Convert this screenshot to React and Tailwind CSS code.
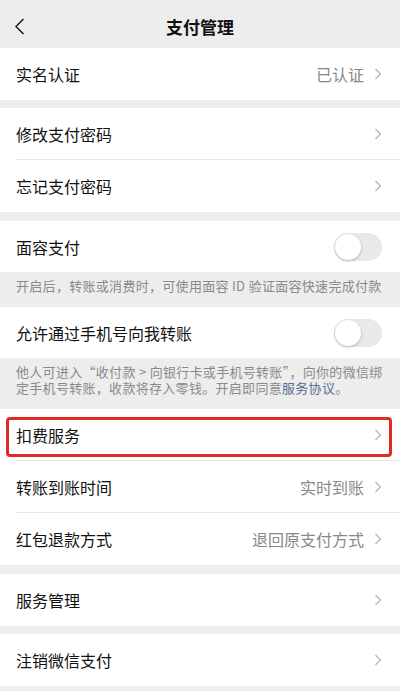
import React from 'react';

const font = { fontFamily: '"Noto Sans CJK SC", "Noto Sans", sans-serif' };

const Chevron = () => (
  <svg width="8" height="12" viewBox="0 0 8 12" className="shrink-0">
    <path d="M1.5 1 L6.5 6 L1.5 11" fill="none" stroke="#b5b5b5" strokeWidth="1.2" />
  </svg>
);

const Switch = () => (
  <div className="w-[48px] h-[28px] rounded-full bg-[#e9e9e9] p-[1px] flex items-center">
    <div className="w-[26px] h-[26px] rounded-full bg-white shadow-[0_1px_3px_rgba(0,0,0,0.25)]" />
  </div>
);

const Row = ({ label, value, toggle, divider, highlight, short }) => (
  <div className="relative bg-white">
    <div className={`${divider || short ? 'h-[51px]' : 'h-[52px]'} flex items-center pl-4 pr-[18px]`}>
      <span className="flex-1 text-[16px] text-[#111]">{label}</span>
      {value && <span className="text-[16px] text-[#888] mr-[10px]">{value}</span>}
      {toggle ? <Switch /> : <Chevron />}
    </div>
    {divider && <div className="ml-4 h-px bg-[#e8e8e8]" />}
    {highlight && (
      <div className="absolute left-[6px] right-[8px] top-[8px] bottom-[4px] border-[3px] border-[#e02a22] rounded-[4px]" />
    )}
  </div>
);

const Note = ({ children }) => (
  <div className="px-4 pt-[6px] pb-[13px] text-[13px] leading-[16px] text-[#8a8a8a] tracking-[0.3px]">
    {children}
  </div>
);

export default function App() {
  return (
    <div className="w-[400px] h-[691px] bg-[#ededed] overflow-hidden" style={font}>
      {/* top bar */}
      <div className="h-[48px] flex items-center relative">
        <svg width="12" height="18" viewBox="0 0 12 18" className="absolute left-[14px] top-[18px]">
          <path d="M9.5 1 L2 8.5 L9.5 16" fill="none" stroke="#1a1a1a" strokeWidth="1.5" />
        </svg>
        <div className="flex-1 text-center text-[17px] font-semibold text-[#111] pt-[6px]">支付管理</div>
      </div>

      <Row label="实名认证" value="已认证" />

      <div className="h-[8px]" />
      <Row label="修改支付密码" divider />
      <Row label="忘记支付密码" />

      <div className="h-[9px]" />
      <Row label="面容支付" toggle short />
      <Note>开启后，转账或消费时，可使用面容 ID 验证面容快速完成付款</Note>

      <Row label="允许通过手机号向我转账" toggle short />
      <Note>
        他人可进入“收付款 &gt; 向银行卡或手机号转账”，向你的微信绑定手机号转账，收款将存入零钱。开启即同意
        <span className="text-[#576b95]">服务协议</span>。
      </Note>

      <Row label="扣费服务" divider highlight />
      <Row label="转账到账时间" value="实时到账" divider />
      <Row label="红包退款方式" value="退回原支付方式" />

      <div className="h-[9px]" />
      <Row label="服务管理" />

      <div className="h-[8px]" />
      <Row label="注销微信支付" />
    </div>
  );
}
